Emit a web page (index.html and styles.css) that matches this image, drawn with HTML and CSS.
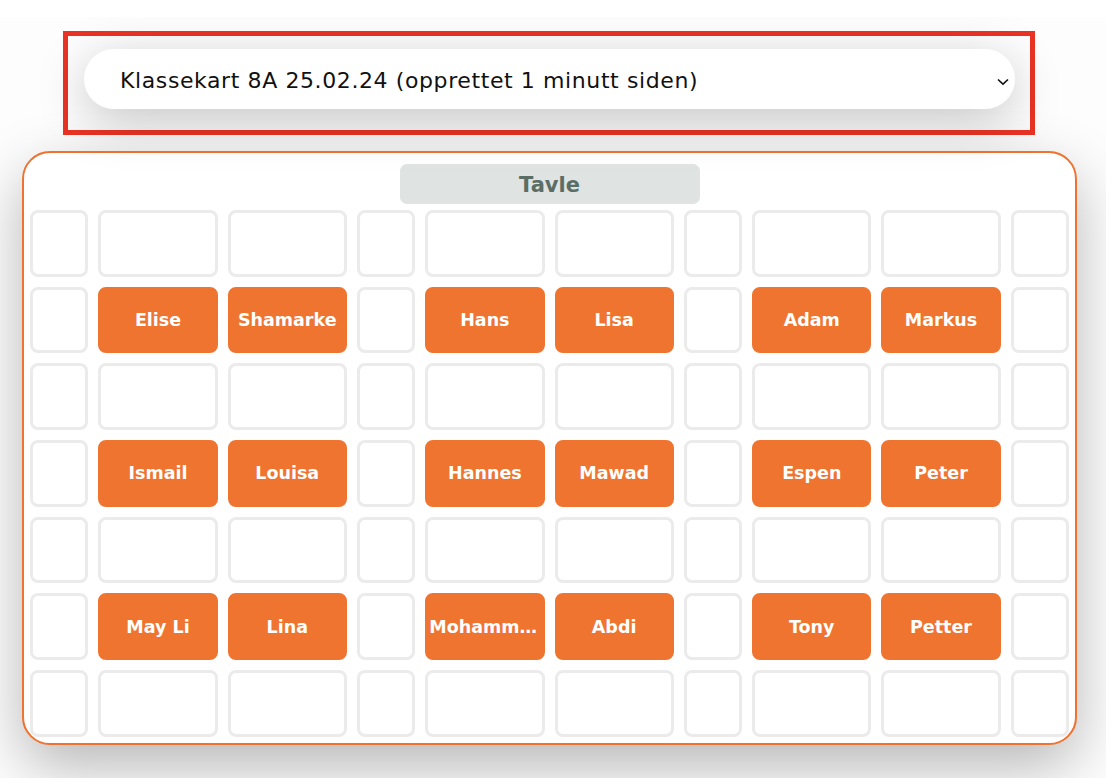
FILE: index.html
```html
<!DOCTYPE html>
<html lang="no">
<head>
<meta charset="utf-8">
<title>Klassekart</title>
<link rel="stylesheet" href="styles.css">
</head>
<body>
<div class="topbar"></div>
<main class="main">
  <div class="picker-frame">
    <div class="picker">
      <select class="picker-select">
        <option>Klassekart 8A 25.02.24 (opprettet 1 minutt siden)</option>
      </select>
      <svg class="picker-chevron" width="12" height="8" viewBox="0 0 12 8" aria-hidden="true">
        <path d="M1 1.5 L6 6.2 L11 1.5" fill="none" stroke="#111" stroke-width="1.6"/>
      </svg>
    </div>
  </div>

  <section class="room">
    <div class="board">Tavle</div>
    <div class="seats">
      <div class="seat"></div><div class="seat"></div><div class="seat"></div><div class="seat"></div><div class="seat"></div><div class="seat"></div><div class="seat"></div><div class="seat"></div><div class="seat"></div><div class="seat"></div>

      <div class="seat"></div><div class="seat taken">Elise</div><div class="seat taken">Shamarke</div><div class="seat"></div><div class="seat taken">Hans</div><div class="seat taken">Lisa</div><div class="seat"></div><div class="seat taken">Adam</div><div class="seat taken">Markus</div><div class="seat"></div>

      <div class="seat"></div><div class="seat"></div><div class="seat"></div><div class="seat"></div><div class="seat"></div><div class="seat"></div><div class="seat"></div><div class="seat"></div><div class="seat"></div><div class="seat"></div>

      <div class="seat"></div><div class="seat taken">Ismail</div><div class="seat taken">Louisa</div><div class="seat"></div><div class="seat taken">Hannes</div><div class="seat taken">Mawad</div><div class="seat"></div><div class="seat taken">Espen</div><div class="seat taken">Peter</div><div class="seat"></div>

      <div class="seat"></div><div class="seat"></div><div class="seat"></div><div class="seat"></div><div class="seat"></div><div class="seat"></div><div class="seat"></div><div class="seat"></div><div class="seat"></div><div class="seat"></div>

      <div class="seat"></div><div class="seat taken">May Li</div><div class="seat taken">Lina</div><div class="seat"></div><div class="seat taken"><span class="name">Mohammed</span></div><div class="seat taken">Abdi</div><div class="seat"></div><div class="seat taken">Tony</div><div class="seat taken">Petter</div><div class="seat"></div>

      <div class="seat"></div><div class="seat"></div><div class="seat"></div><div class="seat"></div><div class="seat"></div><div class="seat"></div><div class="seat"></div><div class="seat"></div><div class="seat"></div><div class="seat"></div>
    </div>
  </section>
</main>
</body>
</html>
```

FILE: styles.css
```css
* { box-sizing: border-box; }

html, body {
  margin: 0;
  padding: 0;
  background: #ffffff;
  font-family: "DejaVu Sans", "Noto Sans", sans-serif;
}

.topbar {
  height: 17px;
  background: #ffffff;
}

.main {
  height: 761px;
  overflow: hidden;
  background: #fdfdfd;
  padding: 14px 0 0 22px;
}

.picker-frame {
  margin-left: 41px;
  width: 972px;
  height: 104px;
  border: 5px solid #ea3324;
  padding: 13px 15px 0 16px;
  position: relative;
  z-index: 1;
}

.picker {
  position: relative;
  height: 60px;
}

.picker-select {
  appearance: none;
  -webkit-appearance: none;
  width: 100%;
  height: 60px;
  border: none;
  border-radius: 30px;
  background: #ffffff;
  box-shadow: 0 12px 50px rgba(0, 0, 0, 0.22);
  padding: 2px 40px 0 36px;
  font-family: "DejaVu Sans", "Noto Sans", sans-serif;
  font-size: 22px;
  letter-spacing: 0.6px;
  color: #111111;
  outline: none;
}

.picker-chevron {
  position: absolute;
  right: 6px;
  top: 29px;
}

.room {
  margin-top: 16px;
  width: 1055px;
  border: 2px solid #ee7330;
  border-radius: 28px;
  background: #ffffff;
  box-shadow: 0 22px 60px rgba(0, 0, 0, 0.28);
  padding: 11px 6px 6px 6px;
  display: flex;
  flex-direction: column;
  align-items: center;
  gap: 6px;
}

.board {
  width: 300px;
  height: 40px;
  background: #dfe3e2;
  border-radius: 7px;
  color: #5a6e66;
  font-weight: bold;
  font-size: 21px;
  padding-top: 2px;
  display: flex;
  align-items: center;
  justify-content: center;
}

.seats {
  align-self: stretch;
  display: grid;
  grid-template-columns: 58.5fr 119.5fr 119.5fr 58.5fr 119.5fr 119.5fr 58.5fr 119.5fr 119.5fr 58.5fr;
  grid-auto-rows: 66.7px;
  gap: 10px;
}

.seat {
  min-width: 0;
  border: 3px solid #ebebeb;
  border-radius: 8px;
  background: #ffffff;
  display: flex;
  align-items: center;
  justify-content: center;
  color: #ffffff;
  font-weight: bold;
  font-size: 17.5px;
  padding: 0 1px;
  overflow: hidden;
}

.seat.taken {
  background: #ee7430;
  border-color: #ee7430;
}

.name {
  overflow: hidden;
  white-space: nowrap;
  text-overflow: ellipsis;
}
```
